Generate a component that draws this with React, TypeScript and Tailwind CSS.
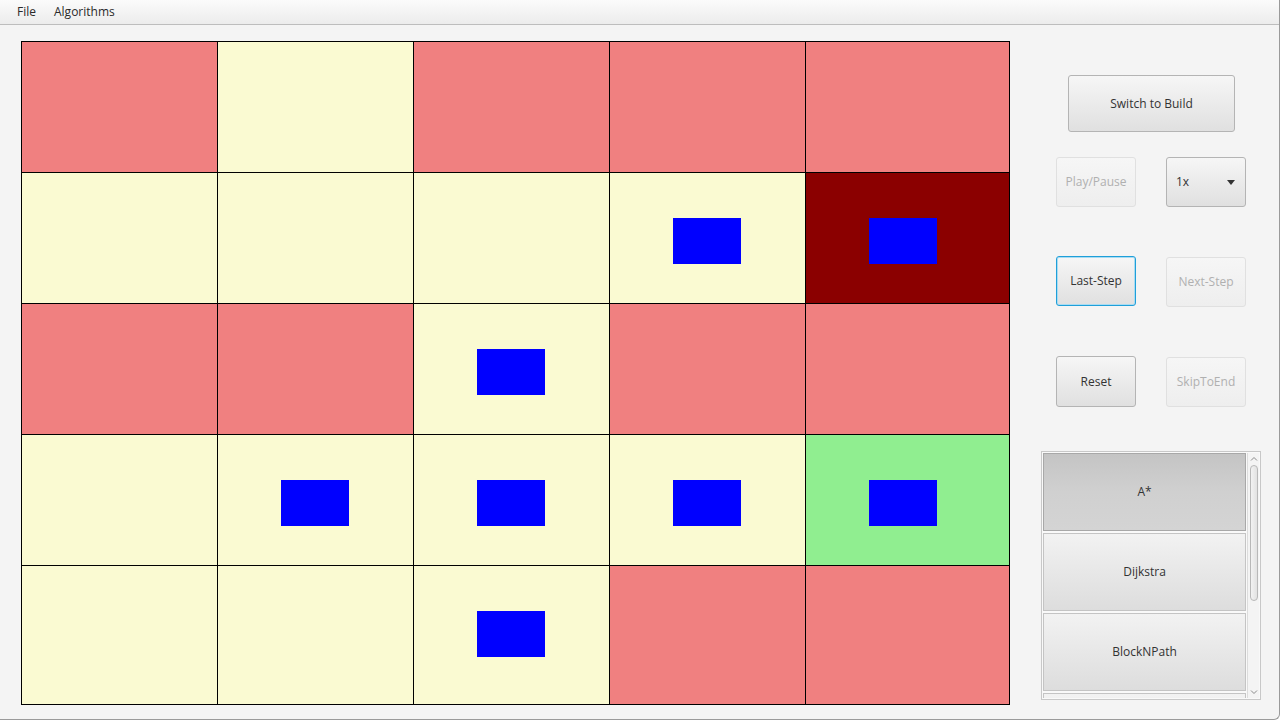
import type { ReactNode } from 'react'

type Cell = { c: string; dot?: boolean }

const K = 'bg-[#f08080]'
const Y = 'bg-[#fafad2]'
const R = 'bg-[#8b0000]'
const G = 'bg-[#90ee90]'

const GRID: Cell[][] = [
  [{ c: K }, { c: Y }, { c: K }, { c: K }, { c: K }],
  [{ c: Y }, { c: Y }, { c: Y }, { c: Y, dot: true }, { c: R, dot: true }],
  [{ c: K }, { c: K }, { c: Y, dot: true }, { c: K }, { c: K }],
  [{ c: Y }, { c: Y, dot: true }, { c: Y, dot: true }, { c: Y, dot: true }, { c: G, dot: true }],
  [{ c: Y }, { c: Y }, { c: Y, dot: true }, { c: K }, { c: K }],
]

function Btn({
  children,
  w,
  h,
  disabled,
  focused,
}: {
  children: ReactNode
  w: string
  h: string
  disabled?: boolean
  focused?: boolean
}) {
  let cls = 'border-[#b4b4b4] bg-gradient-to-b from-[#f6f6f6] to-[#e0e0e0] text-[#333]'
  if (disabled) cls = 'border-[#e0e0e0] bg-gradient-to-b from-[#f6f6f6] to-[#eeeeee] text-[#b0b0b0]'
  if (focused)
    cls =
      'border-[#1f9fd9] bg-gradient-to-b from-[#f6f6f6] to-[#e0e0e0] text-[#333] shadow-[inset_0_0_0_1px_#a9dcf2]'
  return (
    <div className={`flex items-center justify-center rounded-[3px] border text-[12px] ${w} ${h} ${cls}`}>
      {children}
    </div>
  )
}

function ListItem({ label, selected }: { label: string; selected?: boolean }) {
  return (
    <div
      className={`flex h-[78px] shrink-0 items-center justify-center border text-[12px] text-[#333] ${
        selected
          ? 'border-[#a8a8a8] bg-gradient-to-b from-[#c4c4c4] via-[#d0d0d0] to-[#d4d4d4]'
          : 'border-[#c4c4c4] bg-gradient-to-b from-[#f2f2f2] to-[#dddddd]'
      }`}
    >
      {label}
    </div>
  )
}

export default function App() {
  return (
    <div
      className="h-[721px] w-[1282px] overflow-hidden bg-white"
      style={{ fontFamily: '"Open Sans", "Noto Sans", sans-serif' }}
    >
      <div className="flex h-[720px] w-[1280px] flex-col overflow-hidden rounded-br-[6px] border-r border-b border-[#9a9a9a] bg-[#f4f4f4]">
        {/* menu bar */}
        <div className="flex h-[25px] shrink-0 items-center gap-[18px] border-b border-[#bdbdbd] bg-gradient-to-b from-[#fbfbfb] to-[#ececec] pl-[17px] text-[12px] text-[#2a2a2a]">
          <span>File</span>
          <span>Algorithms</span>
        </div>

        <div className="flex flex-1">
          {/* board */}
          <div className="ml-[21px] mt-[16px]">
            <div className="grid grid-cols-[195px_195px_195px_195px_203px] grid-rows-[130px_130px_130px_130px_138px] gap-px border border-black bg-black">
              {GRID.flat().map((cell, i) => (
                <div key={i} className={`pl-[63px] pt-[45px] ${cell.c}`}>
                  {cell.dot && <div className="h-[46px] w-[68px] bg-[#0000ff]" />}
                </div>
              ))}
            </div>
          </div>

          {/* controls */}
          <div className="ml-[31px] flex w-[220px] flex-col">
            <div className="ml-[27px] mt-[50px]">
              <Btn w="w-[167px]" h="h-[57px]">
                Switch to Build
              </Btn>
            </div>
            <div className="ml-[15px] mt-[25px] flex gap-[30px]">
              <Btn w="w-[80px]" h="h-[50px]" disabled>
                Play/Pause
              </Btn>
              <div className="flex h-[50px] w-[80px] items-center justify-between rounded-[3px] border border-[#b4b4b4] bg-gradient-to-b from-[#f6f6f6] to-[#e0e0e0] pl-[9px] pr-[10px] text-[12px] text-[#333]">
                <span>1x</span>
                <svg width="8" height="5" viewBox="0 0 8 5">
                  <path d="M0 0h8L4 5z" fill="#333" />
                </svg>
              </div>
            </div>
            <div className="ml-[15px] mt-[49px] flex items-start gap-[30px]">
              <Btn w="w-[80px]" h="h-[50px]" focused>
                Last-Step
              </Btn>
              <div className="mt-px">
                <Btn w="w-[80px]" h="h-[50px]" disabled>
                  Next-Step
                </Btn>
              </div>
            </div>
            <div className="ml-[15px] mt-[49px] flex items-start gap-[30px]">
              <Btn w="w-[80px]" h="h-[51px]">
                Reset
              </Btn>
              <div className="mt-px">
                <Btn w="w-[80px]" h="h-[50px]" disabled>
                  SkipToEnd
                </Btn>
              </div>
            </div>

            {/* algorithm list */}
            <div className="mt-[44px] flex h-[249px] w-[220px] border border-[#c8c8c8] bg-[#f9f9f9] p-px">
              <div className="flex w-[204px] flex-col gap-[2px] overflow-hidden">
                <ListItem label="A*" selected />
                <ListItem label="Dijkstra" />
                <ListItem label="BlockNPath" />
                <ListItem label="" />
              </div>
              <div className="ml-px flex w-[12px] flex-col items-center border-l border-[#dcdcdc] bg-[#f4f4f4]">
                <svg className="mt-[3px]" width="8" height="5" viewBox="0 0 8 5">
                  <path d="M1 4.5 4 1.5 7 4.5" fill="none" stroke="#8a8a8a" strokeWidth="1" />
                </svg>
                <div className="mt-[4px] h-[136px] w-[8px] rounded-[4px] border border-[#b8b8b8] bg-gradient-to-r from-[#f2f2f2] to-[#e2e2e2]" />
                <div className="flex-1" />
                <svg className="mb-[3px]" width="8" height="5" viewBox="0 0 8 5">
                  <path d="M1 0.5 4 3.5 7 0.5" fill="none" stroke="#8a8a8a" strokeWidth="1" />
                </svg>
              </div>
            </div>
          </div>
        </div>
      </div>
    </div>
  )
}
